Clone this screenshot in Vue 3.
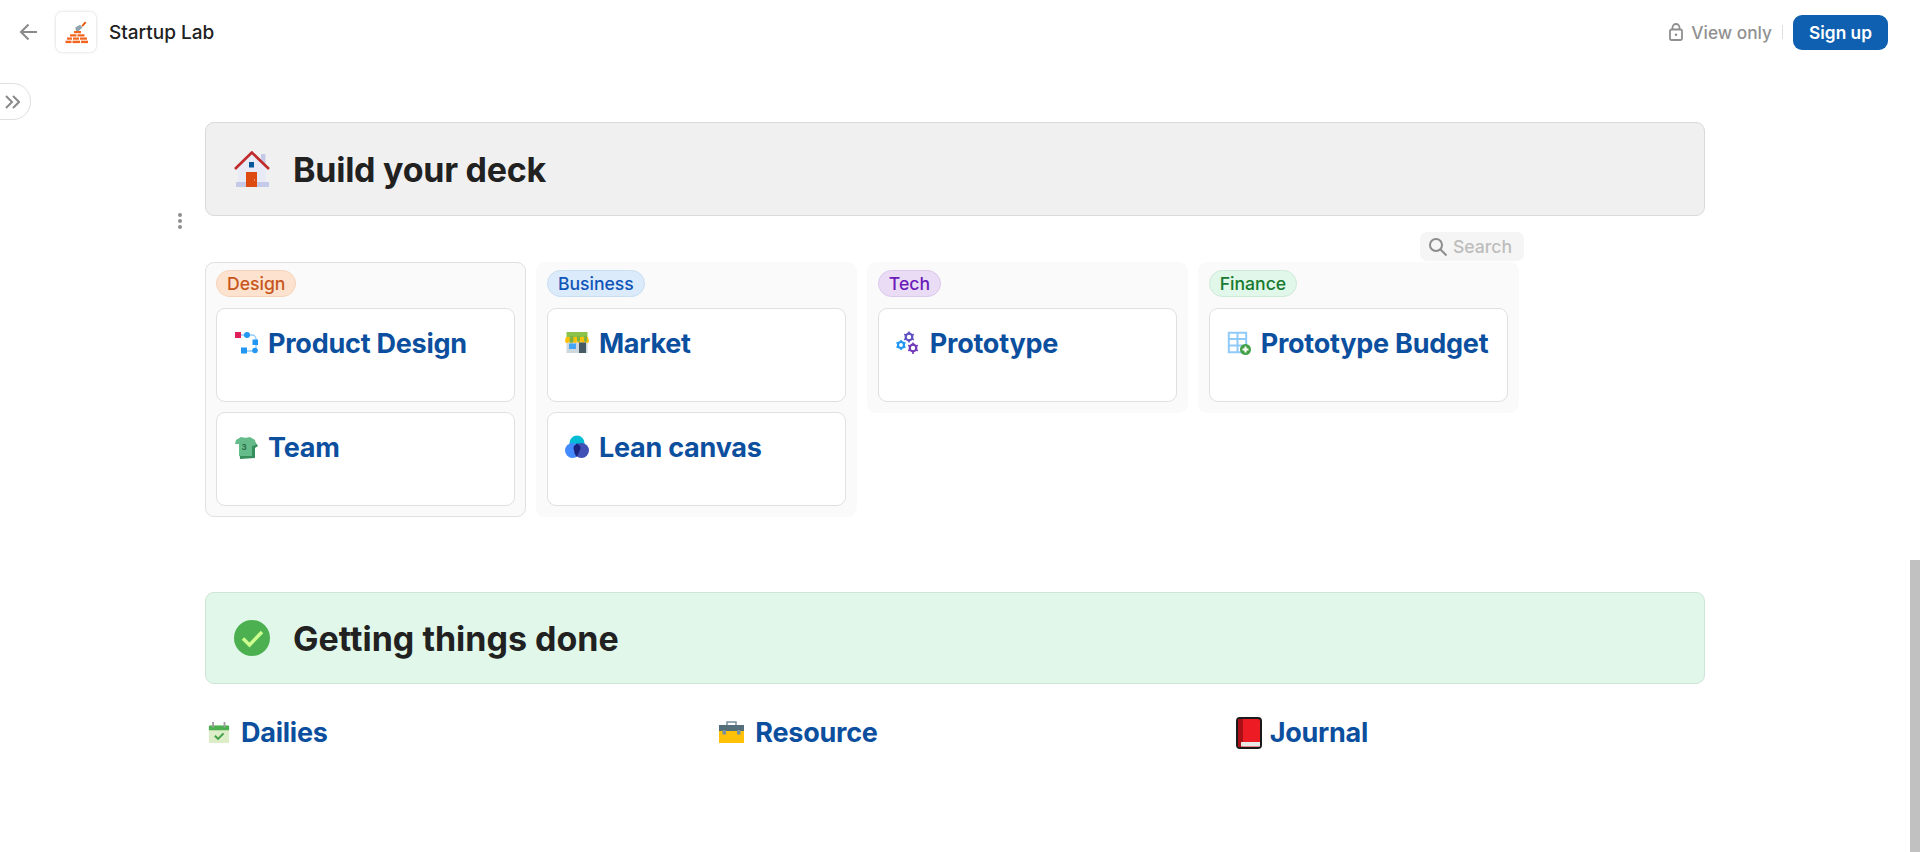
<script setup>
const columns = [
  { name: 'Design', tone: 'orange', outlined: true, cards: [{ title: 'Product Design', icon: 'flow' }, { title: 'Team', icon: 'shirt' }] },
  { name: 'Business', tone: 'blue', cards: [{ title: 'Market', icon: 'shop' }, { title: 'Lean canvas', icon: 'venn' }] },
  { name: 'Tech', tone: 'purple', cards: [{ title: 'Prototype', icon: 'gears' }] },
  { name: 'Finance', tone: 'green', cards: [{ title: 'Prototype Budget', icon: 'table' }] }
]
const links = [
  { title: 'Dailies', icon: 'calendar' },
  { title: 'Resource', icon: 'toolbox' },
  { title: 'Journal', icon: 'book' }
]
</script>

<template>
  <div class="page">
    <header class="topbar">
      <div class="top-left">
        <svg class="back" viewBox="0 0 20 20" width="20" height="20" fill="none" stroke="#8a8a8a" stroke-width="2">
          <path d="M19 10H3M10.500 2.500L3 10l7.500 7.500" />
        </svg>
        <div class="logo">
          <svg viewBox="0 0 40 40" width="40" height="40">
            <path d="M29 9.500l-3.500 4 1.300 1.200 3.500-4z" fill="#e65100" />
            <path d="M26.500 15.500l-2.500-2.800-4.700 2.700 1.300 5.600z" fill="#90a4ae" />
            <g fill="#f4641c" transform="translate(0 -1.500)">
              <rect x="18" y="20.500" width="7" height="2.200" />
              <rect x="14" y="23.800" width="6.500" height="2.200" /><rect x="21.500" y="23.800" width="7" height="2.200" />
              <rect x="11" y="27" width="5" height="2.200" /><rect x="17" y="27" width="6" height="2.200" /><rect x="24" y="27" width="7" height="2.200" />
              <rect x="9.500" y="30.200" width="6" height="2.400" /><rect x="16.500" y="30.200" width="7.500" height="2.400" /><rect x="25" y="30.200" width="7" height="2.400" />
            </g>
          </svg>
        </div>
        <span class="site-title">Startup Lab</span>
      </div>
      <div class="top-right">
        <svg class="lock" viewBox="0 0 14 18" width="14" height="18" fill="none" stroke="#8f8f8f" stroke-width="1.800">
          <rect x="1" y="6.500" width="12" height="10.500" rx="1.500" />
          <path d="M3.500 6.500V4.500a3.500 3.500 0 0 1 7 0v2" />
          <circle cx="7" cy="11.800" r="1.300" fill="#8f8f8f" stroke="none" />
        </svg>
        <span class="view-only">View only</span>
        <span class="divider"></span>
        <button class="signup">Sign up</button>
      </div>
    </header>

    <button class="side-toggle" aria-label="Open sidebar">
      <svg viewBox="0 0 15 14" width="15" height="14" fill="none" stroke="#8a8a8a" stroke-width="2">
        <path d="M1 1l6 6-6 6M8 1l6 6-6 6" />
      </svg>
    </button>

    <main class="content">
      <section class="banner grey">
        <svg class="banner-icon" viewBox="0 0 36 36" width="36" height="36">
          <path d="M27 3h4.500v10L27 9z" fill="#c5cae9" />
          <path d="M18 4L4 17v17h28V17z" fill="#e8eaf6" />
          <rect x="2" y="31" width="33" height="5" fill="#c5cae9" />
          <rect x="12" y="21" width="11" height="15" fill="#dd4a12" />
          <rect x="20" y="28" width=".8" height="2" fill="#f4a98a" />
          <rect x="15" y="11" width="5" height="5.500" fill="#01579b" />
          <path d="M1 18L17.800 1.500 35 18" fill="none" stroke="#c02a2a" stroke-width="2.600" />
        </svg>
        <h1 class="title-build">Build your deck</h1>
      </section>

      <div class="gallery">
        <span class="dots"><i></i><i></i><i></i></span>
        <div class="search-row">
          <div class="search">
            <svg viewBox="0 0 20 20" width="20" height="20" fill="none" stroke="#8c8c8c" stroke-width="2">
              <circle cx="8" cy="8" r="6" /><path d="M12.500 12.500L18.500 18.500" />
            </svg>
            <span>Search</span>
          </div>
        </div>
        <div class="columns">
          <div v-for="col in columns" :key="col.name" class="column" :class="{ outlined: col.outlined }">
            <div class="tag-row"><span class="tag" :class="col.tone">{{ col.name }}</span></div>
            <article v-for="card in col.cards" :key="card.title" class="card">
              <span class="card-icon">
                <svg v-if="card.icon === 'flow'" viewBox="0 0 24 24" width="24" height="24">
                  <path d="M7 4h11a4 4 0 0 1 4 4v9a3 3 0 0 1-3 3H8" fill="none" stroke="#90caf9" stroke-width="1.300" />
                  <rect x="1" y="1" width="6" height="6" fill="#e01e5a" />
                  <circle cx="13" cy="4" r="3" fill="#2196f3" />
                  <rect x="18.500" y="8.500" width="5.500" height="5.500" fill="#2196f3" />
                  <circle cx="21" cy="19.500" r="2.800" fill="#2196f3" />
                  <rect x="7" y="16.500" width="6" height="6" fill="#2196f3" />
                </svg>
                <svg v-else-if="card.icon === 'shirt'" viewBox="0 0 24 24" width="24" height="24">
                  <path d="M5 9l14-5 5 7-3 2v10l-15 1z" fill="#388e5c" />
                  <path d="M7 2c3 1 6 1 9 0l5 3 1 5-4 1v10H5V9H1l1-4z" fill="#66bb8a" />
                  <text x="7.500" y="14.500" font-size="8" font-weight="700" fill="#2b6b47" font-family="Inter, sans-serif">3</text>
                </svg>
                <svg v-else-if="card.icon === 'shop'" viewBox="0 0 24 24" width="24" height="24">
                  <rect x="1.500" y="8" width="21" height="14" fill="#cfd8dc" />
                  <rect x="1.500" y="1" width="21" height="5" fill="#8bc34a" />
                  <path d="M1 6h22l1 4a2 2 0 0 1-4 0 2 2 0 0 1-4 0 2 2 0 0 1-4 0 2 2 0 0 1-4 0 2 2 0 0 1-4 0 2 2 0 0 1-4 0z" fill="#ffc107" />
                  <path d="M5 5h3.500v5a2 2 0 0 1-4 0zM12 5h3v5a2 2 0 0 1-3 0zM19 5h3v5a2 2 0 0 1-3 0z" fill="#7cb342" />
                  <rect x="4" y="12.500" width="7" height="5.500" fill="#42a5f5" />
                  <rect x="14" y="11.500" width="7" height="10.500" fill="#455a64" />
                </svg>
                <svg v-else-if="card.icon === 'venn'" viewBox="0 0 24 24" width="24" height="24">
                  <circle cx="12" cy="8" r="7.500" fill="#00bcd4" />
                  <circle cx="7.500" cy="15.500" r="7.500" fill="#448aff" />
                  <circle cx="16.500" cy="15.500" r="7.500" fill="#3f51b5" />
                  <path d="M12 8c2 2 3 5 2.500 7.500S12 21 12 22c-1-1-3-4-2.500-6.500S10 10 12 8z" fill="#1a237e" />
                  <circle cx="12" cy="13" r="3.500" fill="#1a237e" />
                </svg>
                <svg v-else-if="card.icon === 'gears'" viewBox="0 0 24 24" width="24" height="24" fill="none">
                  <circle cx="13" cy="6" r="3.300" stroke="#5c4fc0" stroke-width="2.200" />
                  <path d="M13 .500v2M13 9.500v2M8.200 3.200l1.700 1M16 7.800l1.800 1M8.200 8.800l1.700-1M16 4.200l1.800-1" stroke="#5c4fc0" stroke-width="1.600" />
                  <circle cx="5" cy="14" r="3" stroke="#2196f3" stroke-width="2.200" />
                  <path d="M5 9v2M5 17v2M.500 11.500l1.800 1M7.700 15.500l1.800 1M.500 16.500l1.800-1M7.700 12.500l1.800-1" stroke="#2196f3" stroke-width="1.600" />
                  <circle cx="17" cy="17" r="3.300" stroke="#7139b8" stroke-width="2.200" />
                  <path d="M17 11.500v2M17 20.500v2.500M12.200 14.200l1.700 1M20 18.800l1.800 1M12.200 19.800l1.700-1M20 15.200l1.800-1" stroke="#7139b8" stroke-width="1.600" />
                </svg>
                <svg v-else-if="card.icon === 'table'" viewBox="0 0 24 24" width="24" height="24">
                  <path d="M1.800 1.800h17.400v19.400H1.800zM1.800 8h17.400M1.800 14.500h17.400M10.500 1.800v19.400" fill="#fff" stroke="#90caf9" stroke-width="2" />
                  <circle cx="18.500" cy="18.500" r="5.500" fill="#43a047" />
                  <path d="M18.500 15.500v6M15.500 18.500h6" stroke="#fff" stroke-width="2" />
                </svg>
              </span>
              <span class="link-text">{{ card.title }}</span>
            </article>
          </div>
        </div>
      </div>

      <section class="banner green">
        <svg class="banner-icon" viewBox="0 0 36 36" width="36" height="36">
          <circle cx="18" cy="18" r="18" fill="#4caf50" />
          <path d="M9 18.500l6.500 6.500L28 12" fill="none" stroke="#ccff90" stroke-width="3.500" />
        </svg>
        <h1 class="title-done">Getting things done</h1>
      </section>

      <nav class="links">
        <a v-for="link in links" :key="link.title" class="page-link" :class="link.icon">
          <span class="link-icon">
            <svg v-if="link.icon === 'calendar'" viewBox="0 0 24 24" width="22" height="22">
              <rect x="1" y="5" width="22" height="19" rx="1" fill="#dcedc8" />
              <path d="M1 6a1 1 0 0 1 1-1h20a1 1 0 0 1 1 1v4H1z" fill="#4caf50" />
              <path d="M5.500 1v6M18 1v6" stroke="#9e9e9e" stroke-width="2" />
              <path d="M7.500 16l3.500 3.500 6-6" fill="none" stroke="#43a047" stroke-width="2.200" />
            </svg>
            <svg v-else-if="link.icon === 'toolbox'" viewBox="0 0 25 24" width="25" height="24">
              <path d="M8 5V2h9v3" fill="none" stroke="#78909c" stroke-width="1.500" />
              <rect y="5" width="25" height="8" fill="#546e7a" />
              <rect y="11" width="25" height="12" fill="#ffc107" />
              <rect x="3.500" y="10" width="3.500" height="4.500" fill="#78909c" />
              <rect x="18" y="10" width="3.500" height="4.500" fill="#78909c" />
            </svg>
            <svg v-else viewBox="0 0 26 32" width="26" height="32">
              <rect x="1" y="1" width="24" height="30" rx="3" fill="#ed1c24" stroke="#1a1a1a" stroke-width="2" />
              <rect x="2" y="2" width="5" height="28" fill="#a80f16" />
              <rect x="5" y="25" width="19" height="4.500" fill="#e8e8e8" />
            </svg>
          </span>
          <span class="link-text">{{ link.title }}</span>
        </a>
      </nav>
    </main>

    <div class="scroll-thumb"></div>
  </div>
</template>

<style>
html, body { margin: 0; overflow: hidden; background: #fff; }
</style>

<style scoped>
.page {
  position: relative;
  width: 1920px;
  height: 852px;
  overflow: hidden;
  font-family: Inter, "Liberation Sans", sans-serif;
  color: #212121;
  background: #fff;
}
.topbar {
  height: 64px;
  display: flex;
  align-items: center;
  justify-content: space-between;
  padding: 0 32px 0 18px;
}
.top-left, .top-right { display: flex; align-items: center; }
.back { margin: -1px 18px 0 0; }
.logo {
  width: 40px;
  height: 40px;
  border-radius: 6px;
  background: #fff;
  box-shadow: 0 0 3px rgba(0, 0, 0, .2);
}
.site-title { margin-left: 13px; font-size: 19px; font-weight: 500; }
.lock { margin-right: 8px; }
.view-only { font-size: 17.3px; font-weight: 500; color: #919191; }
.divider { width: 1px; height: 14px; margin: 0 10px; background: #e0e0e0; }
.signup {
  width: 95px;
  height: 35px;
  border: 0;
  border-radius: 9px;
  background: #0f60b0;
  color: #fff;
  font: 600 17.3px Inter, sans-serif;
}
.side-toggle {
  position: absolute;
  left: -1px;
  top: 83px;
  width: 32px;
  height: 37px;
  padding: 0 0 0 5px;
  display: flex;
  align-items: center;
  border: 1px solid #e0e0e0;
  border-radius: 0 18px 18px 0;
  background: #fff;
}
.content { width: 1500px; margin-left: 205px; padding-top: 58px; }
.banner {
  display: flex;
  align-items: center;
  box-sizing: border-box;
  padding-left: 28px;
  border-radius: 9px;
}
.banner h1 { margin: 0 0 0 23px; font-size: 34px; font-weight: 700; }
.title-build { letter-spacing: -.25px; }
.grey { height: 94px; background: #f0f0f0; border: 1px solid #d9d9d9; }
.green { height: 92px; background: #e0f7e9; border: 1px solid #cde5d6; margin-top: 75px; }
.gallery { position: relative; margin-top: 16px; }
.dots {
  position: absolute;
  left: -27px;
  top: -19px;
  display: flex;
  flex-direction: column;
  gap: 2px;
}
.dots i { width: 4px; height: 4px; border-radius: 50%; background: #8f8f8f; }
.search-row { width: 1319px; display: flex; justify-content: flex-end; margin-bottom: 1px; }
.search {
  width: 104px;
  height: 29px;
  box-sizing: border-box;
  padding-left: 8px;
  display: flex;
  align-items: center;
  gap: 5px;
  border-radius: 7px;
  background: #f5f5f5;
  color: #bdbdbd;
  font-size: 17.6px;
  font-weight: 500;
}
.columns { display: flex; align-items: flex-start; gap: 10px; }
.column {
  width: 320.9px;
  box-sizing: border-box;
  padding: 7px 10px 10px;
  border-radius: 9px;
  background: #fafafa;
  border: 1px solid transparent;
}
.column.outlined { border-color: #e0e0e0; }
.tag-row { height: 27px; margin-bottom: 11px; }
.tag {
  display: inline-flex;
  align-items: center;
  height: 27px;
  box-sizing: border-box;
  padding: 0 10px;
  border-radius: 14px;
  font-size: 17.6px;
  font-weight: 500;
  border: 1px solid;
}
.orange { background: #fde3cf; border-color: #f5d3ba; color: #c8561c; }
.blue { background: #dcebfb; border-color: #c9ddf3; color: #0f55b8; }
.purple { background: #eadcf5; border-color: #dcc8ec; color: #6a1bb8; }
.tag.green { background: #e0f7e9; border-color: #cde9d7; color: #177a2e; height: 27px; margin: 0; }
.card {
  height: 94px;
  box-sizing: border-box;
  padding: 15px 0 0 17px;
  display: flex;
  align-items: flex-start;
  gap: 10px;
  border: 1px solid #e0e0e0;
  border-radius: 9px;
  background: #fff;
}
.card + .card { margin-top: 10px; }
.card-icon { width: 24px; height: 24px; margin-top: 7px; flex: none; }
.link-text { font-size: 27px; font-weight: 700; line-height: 40px; color: #0b4f9e; letter-spacing: -.24px; }
.links {
  display: grid;
  grid-template-columns: repeat(3, 1fr);
  column-gap: 43px;
  margin-top: 29px;
}
.page-link { display: flex; align-items: center; height: 40px; }
.link-icon { width: 36px; flex: none; display: flex; align-items: center; padding-left: 3px; box-sizing: border-box; }
.calendar svg { margin-top: -3px; }
.toolbox .link-icon { padding-left: 0; }
.toolbox svg { margin-top: -2px; }
.book .link-icon { padding-left: 2px; }
.scroll-thumb {
  position: absolute;
  right: 0;
  top: 560px;
  width: 10px;
  height: 292px;
  background: #c1c1c1;
}
</style>
